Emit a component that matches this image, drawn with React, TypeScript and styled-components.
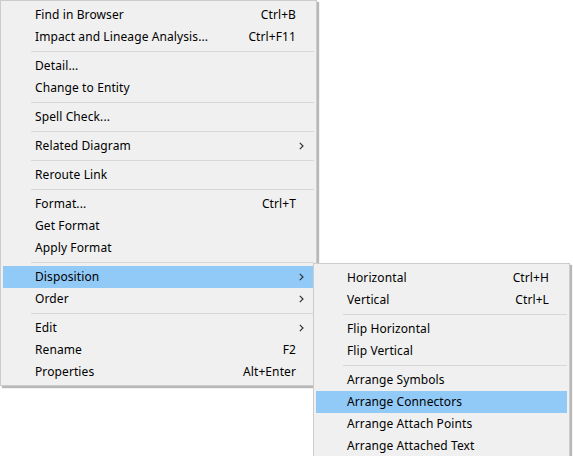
import React from "react";
import styled, { createGlobalStyle } from "styled-components";

const Global = createGlobalStyle`
  html, body { margin: 0; padding: 0; background: #ffffff; }
  body { font-family: "Noto Sans", "Open Sans", sans-serif; }
`;

const Stage = styled.div`
  position: relative;
  width: 573px;
  height: 456px;
  overflow: hidden;
  background: #ffffff;
  display: flex;
  align-items: flex-start;
`;

const Menu = styled.div<{ $width: number }>`
  width: ${(p) => p.$width}px;
  box-sizing: border-box;
  background: #f0f0f0;
  border: 1px solid #cccccc;
  padding: 3px 2px 2px 2px;
  box-shadow: 2px 2px 1px rgba(0, 0, 0, 0.28);
  display: flex;
  flex-direction: column;
`;

const SubMenu = styled(Menu)`
  position: absolute;
  left: 313px;
  top: 263px;
`;

const Item = styled.div<{ $active?: boolean; $textLeft: number; $shortRight: number }>`
  height: 22px;
  box-sizing: border-box;
  padding-bottom: 1px;
  display: flex;
  align-items: center;
  padding-left: ${(p) => p.$textLeft}px;
  padding-right: ${(p) => p.$shortRight}px;
  background: ${(p) => (p.$active ? "#91c9f7" : "transparent")};
  font-size: 12px;
  letter-spacing: 0.1px;
  color: #000000;
  white-space: nowrap;
  position: relative;
`;

const Label = styled.span`
  flex: 1;
`;

const Shortcut = styled.span`
  text-align: right;
`;

const Arrow = styled.svg`
  position: absolute;
  right: 10px;
  top: 7px;
`;

const Sep = styled.div<{ $left: number }>`
  height: 7px;
  display: flex;
  align-items: center;
  padding-left: ${(p) => p.$left}px;
  &::after {
    content: "";
    flex: 1;
    height: 1px;
    background: #d7d7d7;
  }
`;

type Entry =
  | { sep: true }
  | { label: string; shortcut?: string; sub?: boolean; active?: boolean; sep?: false };

const mainItems: Entry[] = [
  { label: "Find in Browser", shortcut: "Ctrl+B" },
  { label: "Impact and Lineage Analysis...", shortcut: "Ctrl+F11" },
  { sep: true },
  { label: "Detail..." },
  { label: "Change to Entity" },
  { sep: true },
  { label: "Spell Check..." },
  { sep: true },
  { label: "Related Diagram", sub: true },
  { sep: true },
  { label: "Reroute Link" },
  { sep: true },
  { label: "Format...", shortcut: "Ctrl+T" },
  { label: "Get Format" },
  { label: "Apply Format" },
  { sep: true },
  { label: "Disposition", sub: true, active: true },
  { label: "Order", sub: true },
  { sep: true },
  { label: "Edit", sub: true },
  { label: "Rename", shortcut: "F2" },
  { label: "Properties", shortcut: "Alt+Enter" },
];

const subItems: Entry[] = [
  { label: "Horizontal", shortcut: "Ctrl+H" },
  { label: "Vertical", shortcut: "Ctrl+L" },
  { sep: true },
  { label: "Flip Horizontal" },
  { label: "Flip Vertical" },
  { sep: true },
  { label: "Arrange Symbols" },
  { label: "Arrange Connectors", active: true },
  { label: "Arrange Attach Points" },
  { label: "Arrange Attached Text" },
];

const Chevron = () => (
  <Arrow width="5" height="8" viewBox="0 0 5 8">
    <path d="M0.8 0.8 L4 4 L0.8 7.2" fill="none" stroke="#333" strokeWidth="1.2" />
  </Arrow>
);

const renderItems = (items: Entry[], textLeft: number, shortRight: number, sepLeft: number) =>
  items.map((it, i) =>
    it.sep ? (
      <Sep key={i} $left={sepLeft} />
    ) : (
      <Item key={i} $active={it.active} $textLeft={textLeft} $shortRight={shortRight}>
        <Label>{it.label}</Label>
        {it.shortcut && <Shortcut>{it.shortcut}</Shortcut>}
        {it.sub && <Chevron />}
      </Item>
    )
  );

export default function App() {
  return (
    <>
      <Global />
      <Stage>
        <Menu $width={317}>{renderItems(mainItems, 32, 18, 28)}</Menu>
        <SubMenu $width={257}>{renderItems(subItems, 31, 18, 27)}</SubMenu>
      </Stage>
    </>
  );
}
